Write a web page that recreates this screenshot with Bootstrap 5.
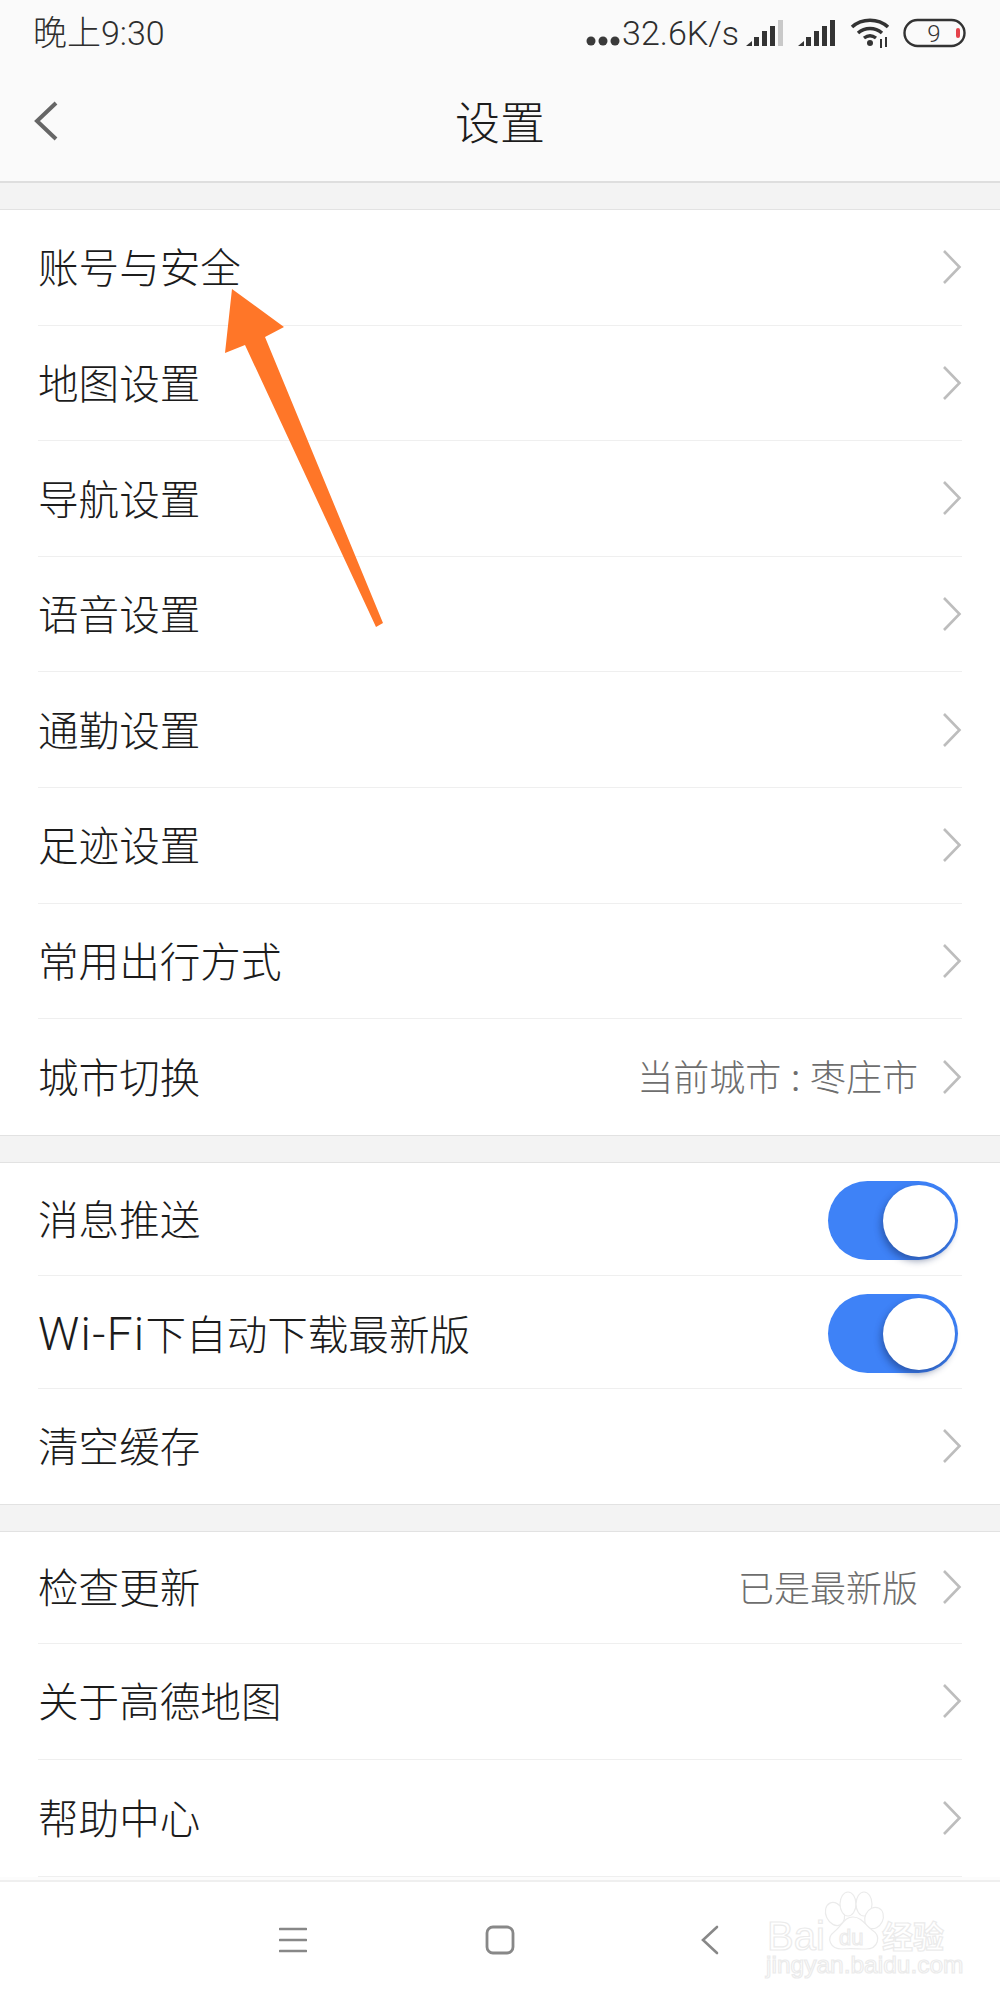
<!DOCTYPE html>
<html lang="zh-CN">
<head>
    <meta charset="UTF-8">
    <title>设置</title>
    <link href="https://cdn.jsdelivr.net/npm/bootstrap@5.3.0/dist/css/bootstrap.min.css" rel="stylesheet">
    <style>
        body {
            width: 1000px;
            height: 2000px;
            margin: 0;
            overflow: hidden;
            position: relative;
            background: #f3f3f3;
            color: #1c1c1c;
            font-family: Roboto, "Noto Sans CJK SC", sans-serif;
        }
        .status-bar {
            height: 62px;
            padding: 4px 33px 0 33px;
            background: #fafafa;
            color: #2e2e2e;
            font-size: 34px;
            font-weight: 300;
        }
        .status-icons svg { display: block; }
        .speed-dots { margin-top: 16px; margin-right: 2px; }
        .speed-text { margin-right: 7px; }
        .sig-a { margin-right: 14px; }
        .sig-b { margin-right: 14px; }
        .wifi-icon { margin-right: 11px; }
        .title-bar {
            height: 121px;
            padding-top: 6px;
            background: #fafafa;
            border-bottom: 2px solid #dedede;
        }
        .title-side { width: 200px; padding-left: 34px; padding-bottom: 7px; }
        .title-text { font-size: 45px; font-weight: 300; color: #1c1c1c; }
        .group {
            margin-top: 26px;
            background: #fff;
            border-top: 1px solid #e2e2e2;
            border-bottom: 1px solid #e2e2e2;
        }
        .group-last { border-bottom: 0; }
        .set-row {
            height: 115.6px;
            margin-left: 38px;
            margin-right: 38px;
            border-bottom: 1px solid #efefef;
            font-size: 40.6px;
            font-weight: 300;
        }
        .set-row > span:first-child { padding-top: 5px; }
        .group > .set-row:last-child { border-bottom: 0; }
        .group-last > .set-row:last-child { height: 117px; border-bottom: 1px solid #efefef; }
        .row-short { height: 113px; }
        .row-mid { height: 115px; }
        .row-top { height: 112px; }
        .row-next { height: 116px; }
        .latin-part { font-size: 46px; letter-spacing: 1.3px; }
        .set-value { color: #6e6e6e; font-size: 36px; margin-top: 5px; margin-right: 24px; }
        .colon { margin: 0 10px; font-weight: 400; }
        .chev { display: block; }
        .switch-track {
            display: block;
            position: relative;
            width: 130px;
            height: 79px;
            margin-top: 3px;
            margin-right: 4px;
            border-radius: 40px;
            background: #3e82f7;
        }
        .switch-track::after {
            content: "";
            position: absolute;
            top: 4px;
            right: 3px;
            width: 72px;
            height: 72px;
            border-radius: 50%;
            background: #fff;
            box-shadow: -2px 4px 7px rgba(20, 40, 90, .45);
        }
        .nav-gap {
            height: 3px;
            background: #fcfcfc;
        }
        .nav-bar {
            height: 121px;
            padding-left: 279px;
            padding-bottom: 3px;
            background: #fff;
            border-top: 2px solid #efefef;
        }
        .nav-home { margin-left: 178px; }
        .nav-back { margin-left: 186px; }
        .arrow-mark { position: absolute; left: 0; top: 0; pointer-events: none; }
        .wm { position: absolute; left: 750px; top: 1880px; }
        .wm text {
            fill: #fff;
            stroke: #ebebeb;
            stroke-width: 1.2px;
            font-family: "Liberation Sans", "Noto Sans CJK SC", sans-serif;
        }
    </style>
</head>
<body>
    <svg width="0" height="0" class="position-absolute">
        <symbol id="chev" viewBox="0 0 20 36">
            <path d="M2 2 L17.5 18 L2 34" fill="none" stroke="#bdbdbd" stroke-width="2.6"/>
        </symbol>
    </svg>

    <div class="status-bar d-flex align-items-center justify-content-between">
        <span>晚上9:30</span>
        <div class="status-icons d-flex align-items-center">
            <svg width="34" height="10" class="speed-dots" viewBox="0 0 34 10">
                <circle cx="5" cy="5" r="4.5" fill="#3a3a3a"/><circle cx="17" cy="5" r="4.5" fill="#3a3a3a"/><circle cx="29" cy="5" r="4.5" fill="#3a3a3a"/>
            </svg>
            <span class="speed-text">32.6K/s</span>
            <svg width="38" height="28" class="sig-a" viewBox="0 0 38 28">
                <path d="M0 27 L6 22 V27Z" fill="#333"/><rect x="8" y="18" width="5" height="9" fill="#333"/><rect x="16" y="12" width="5" height="15" fill="#333"/><rect x="24" y="7" width="5" height="20" fill="#333"/><rect x="32" y="1" width="5" height="26" fill="#c9c9c9"/>
            </svg>
            <svg width="38" height="28" class="sig-b" viewBox="0 0 38 28">
                <path d="M0 27 L6 22 V27Z" fill="#333"/><rect x="8" y="18" width="5" height="9" fill="#333"/><rect x="16" y="12" width="5" height="15" fill="#333"/><rect x="24" y="7" width="5" height="20" fill="#333"/><rect x="32" y="1" width="5" height="26" fill="#333"/>
            </svg>
            <svg width="42" height="32" class="wifi-icon" viewBox="0 0 42 32">
                <path d="M2 10 C12 1 28 1 38 10 M8 16 C15 10 25 10 32 16" fill="none" stroke="#333" stroke-width="3.6"/>
                <path d="M14 21 C18 18 22 18 26 21" fill="none" stroke="#333" stroke-width="3.4"/>
                <circle cx="20" cy="26" r="3" fill="#333"/>
                <path d="M31 22 V31 M36 20 V30" stroke="#333" stroke-width="2"/>
            </svg>
            <svg width="64" height="30" viewBox="0 0 64 30">
                <rect x="1.5" y="2" width="60" height="26" rx="13" fill="none" stroke="#333" stroke-width="2.4"/>
                <rect x="53" y="10" width="4" height="10" rx="2" fill="#e5424a"/>
                <text x="31" y="24" text-anchor="middle" font-size="24" fill="#333" font-family="Roboto, sans-serif">9</text>
            </svg>
        </div>
    </div>

    <div class="title-bar d-flex align-items-center">
        <div class="title-side">
            <svg width="24" height="40" viewBox="0 0 24 40" class="d-block">
                <path d="M22 2 L3 20 L22 38" fill="none" stroke="#666" stroke-width="4"/>
            </svg>
        </div>
        <div class="title-text flex-grow-1 text-center">设置</div>
        <div class="title-side"></div>
    </div>

    <div class="group">
        <div class="set-row d-flex align-items-center justify-content-between"><span>账号与安全</span><svg class="chev" width="20" height="36"><use href="#chev"/></svg></div>
        <div class="set-row d-flex align-items-center justify-content-between"><span>地图设置</span><svg class="chev" width="20" height="36"><use href="#chev"/></svg></div>
        <div class="set-row d-flex align-items-center justify-content-between"><span>导航设置</span><svg class="chev" width="20" height="36"><use href="#chev"/></svg></div>
        <div class="set-row d-flex align-items-center justify-content-between"><span>语音设置</span><svg class="chev" width="20" height="36"><use href="#chev"/></svg></div>
        <div class="set-row d-flex align-items-center justify-content-between"><span>通勤设置</span><svg class="chev" width="20" height="36"><use href="#chev"/></svg></div>
        <div class="set-row d-flex align-items-center justify-content-between"><span>足迹设置</span><svg class="chev" width="20" height="36"><use href="#chev"/></svg></div>
        <div class="set-row d-flex align-items-center justify-content-between"><span>常用出行方式</span><svg class="chev" width="20" height="36"><use href="#chev"/></svg></div>
        <div class="set-row d-flex align-items-center justify-content-between"><span>城市切换</span><div class="d-flex align-items-center"><span class="set-value">当前城市<span class="colon">:</span>枣庄市</span><svg class="chev" width="20" height="36"><use href="#chev"/></svg></div></div>
    </div>

    <div class="group">
        <div class="set-row row-short d-flex align-items-center justify-content-between"><span>消息推送</span><span class="switch-track"></span></div>
        <div class="set-row row-short d-flex align-items-center justify-content-between"><span><span class="latin-part">Wi-Fi</span>下自动下载最新版</span><span class="switch-track"></span></div>
        <div class="set-row row-mid d-flex align-items-center justify-content-between"><span>清空缓存</span><svg class="chev" width="20" height="36"><use href="#chev"/></svg></div>
    </div>

    <div class="group group-last">
        <div class="set-row row-top d-flex align-items-center justify-content-between"><span>检查更新</span><div class="d-flex align-items-center"><span class="set-value">已是最新版</span><svg class="chev" width="20" height="36"><use href="#chev"/></svg></div></div>
        <div class="set-row row-next d-flex align-items-center justify-content-between"><span>关于高德地图</span><svg class="chev" width="20" height="36"><use href="#chev"/></svg></div>
        <div class="set-row d-flex align-items-center justify-content-between"><span>帮助中心</span><svg class="chev" width="20" height="36"><use href="#chev"/></svg></div>
    </div>

    <div class="nav-gap"></div>
    <div class="nav-bar d-flex align-items-center">
        <svg width="28" height="26" viewBox="0 0 28 26"><path d="M1 2 H27 M1 13 H27 M1 24 H27" stroke="#888" stroke-width="2.6" stroke-linecap="round"/></svg>
        <svg class="nav-home" width="30" height="30" viewBox="0 0 30 30"><rect x="2" y="2" width="26" height="26" rx="6" fill="none" stroke="#888" stroke-width="2.8"/></svg>
        <svg class="nav-back" width="18" height="30" viewBox="0 0 18 30"><path d="M16 2 L2 15 L16 28" fill="none" stroke="#888" stroke-width="2.6" stroke-linecap="round"/></svg>
    </div>

    <svg class="wm" width="230" height="115" viewBox="0 0 230 115" fill="#fff" stroke="#ebebeb" stroke-width="1.2">
        <ellipse cx="85" cy="34" rx="9" ry="12" transform="rotate(-25 85 34)"/>
        <ellipse cx="98" cy="24" rx="8" ry="12"/>
        <ellipse cx="114" cy="24" rx="8" ry="12"/>
        <ellipse cx="124" cy="38" rx="9" ry="11" transform="rotate(25 124 38)"/>
        <path d="M103 37 C112 37 116 46 122 50 C132 56 128 69 116 69 C108 69 100 68 92 69 C80 69 76 58 84 52 C92 46 94 37 103 37Z"/>
        <text x="17" y="70" font-size="40">Bai</text>
        <text x="89" y="65" font-size="22">du</text>
        <text x="132" y="68" font-size="31" font-weight="700">经验</text>
        <text x="16" y="93" font-size="24.5">jingyan.baidu.com</text>
    </svg>

    <svg class="arrow-mark" width="1000" height="700" viewBox="0 0 1000 700">
        <polygon points="232,289 284,327 265,337 383,623 376,627 245,345 225,353" fill="#ff7628"/>
    </svg>

    <script src="https://cdn.jsdelivr.net/npm/bootstrap@5.3.0/dist/js/bootstrap.bundle.min.js"></script>
</body>
</html>
